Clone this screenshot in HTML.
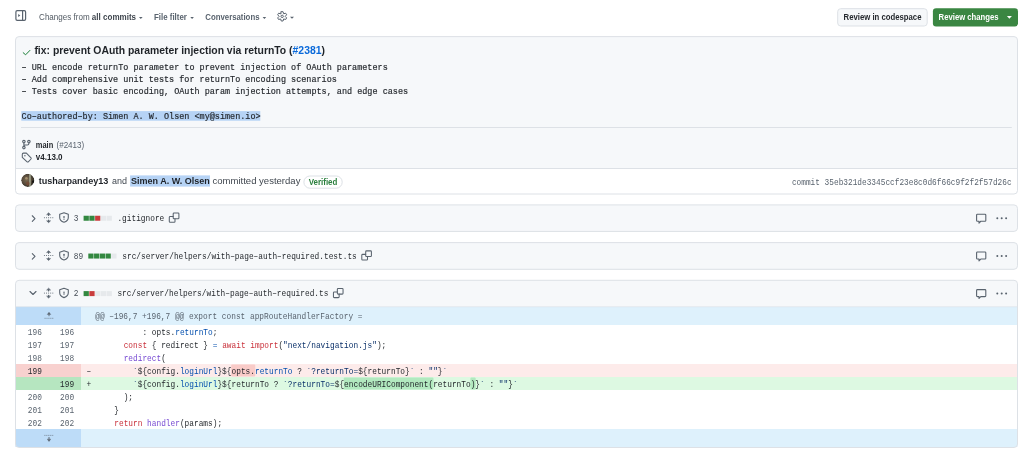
<!DOCTYPE html>
<html><head><meta charset="utf-8"><title>commit</title>
<style>
html,body{margin:0;padding:0;background:#ffffff;width:1024px;height:452px;overflow:hidden;}
svg{display:block;will-change:transform;font-family:"Liberation Sans", sans-serif;}
text{white-space:pre;}
</style></head><body>
<svg width="1024" height="452" viewBox="0 0 1024 452">
<rect x="15.9" y="10.6" width="9.7" height="9.7" fill="none" stroke="#59636e" stroke-width="1.2" rx="1.3" />
<path d="M22.6 10.6V20.3" fill="none" stroke="#59636e" stroke-width="1.2" stroke-linejoin="round" stroke-linecap="round" />
<path d="M18.2 13.9L20.3 15.45L18.2 17Z" fill="#59636e" />
<text x="39.1" y="19.85" font-size="8.6" fill="#525a63" textLength="97" lengthAdjust="spacingAndGlyphs" ><tspan>Changes from </tspan><tspan font-weight="bold" fill="#40474f">all commits</tspan></text>
<path d="M139.0 16.9L142.60000000000002 16.9L140.8 18.9Z" fill="#59636e" />
<text x="154" y="19.85" font-size="8.6" fill="#59636e" font-weight="bold" textLength="32.9" lengthAdjust="spacingAndGlyphs" >File filter</text>
<path d="M190.29999999999998 16.9L193.9 16.9L192.1 18.9Z" fill="#59636e" />
<text x="205.3" y="19.85" font-size="8.6" fill="#59636e" font-weight="bold" textLength="54.2" lengthAdjust="spacingAndGlyphs" >Conversations</text>
<path d="M262.59999999999997 16.9L266.2 16.9L264.4 18.9Z" fill="#59636e" />
<path d="M281.24 11.69L283.06 11.69L283.65 13.75L285.73 13.23L286.64 14.80L285.15 16.35L286.64 17.90L285.73 19.47L283.65 18.95L283.06 21.01L281.24 21.01L280.65 18.95L278.57 19.47L277.66 17.90L279.15 16.35L277.66 14.80L278.57 13.23L280.65 13.75Z" fill="none" stroke="#59636e" stroke-width="1.0" stroke-linejoin="round" stroke-linecap="round" />
<circle cx="282.15" cy="16.35" r="1.2" fill="none" stroke="#59636e" stroke-width="1.0"/>
<path d="M290.0 16.8L294.0 16.8L292.0 18.8Z" fill="#59636e" />
<rect x="837.7" y="8.7" width="89.5" height="17.3" fill="#f6f8fa" stroke="#dde1e6" stroke-width="1" rx="3" />
<text x="843.6" y="19.75" font-size="8.4" fill="#25292e" font-weight="bold" textLength="77.9" lengthAdjust="spacingAndGlyphs" >Review in codespace</text>
<rect x="932.9" y="8.2" width="85.1" height="18.2" fill="#3a8642" rx="3.2" />
<text x="938.6" y="19.75" font-size="8.4" fill="#ffffff" font-weight="bold" textLength="60" lengthAdjust="spacingAndGlyphs" >Review changes</text>
<path d="M1006.9 16.099999999999998L1011.9 16.099999999999998L1009.4 18.7Z" fill="#ffffff" />
<rect x="15.5" y="36.6" width="1002.0" height="157.4" fill="#ffffff" rx="3.5" />
<path d="M15.5 168.5V40.1a3.5 3.5 0 0 1 3.5-3.5H1014.0a3.5 3.5 0 0 1 3.5 3.5V168.5Z" fill="#f6f8fa"/>
<rect x="15.5" y="36.6" width="1002.0" height="157.4" fill="none" stroke="#dde1e6" stroke-width="1" rx="3.5" />
<path d="M15.5 168.5H1017.5" fill="none" stroke="#dde1e6" stroke-width="1" stroke-linejoin="round" stroke-linecap="butt"/>
<path d="M23.2 52.7L25.6 54.8L29.9 50.4" fill="none" stroke="#1a7f37" stroke-width="1.0" stroke-linejoin="round" stroke-linecap="round" />
<text x="34.4" y="53.7" font-size="10.4" fill="#1f2328" font-weight="bold" textLength="290.6" lengthAdjust="spacingAndGlyphs" ><tspan>fix: prevent OAuth parameter injection via returnTo (</tspan><tspan fill="#0969da">#2381</tspan><tspan>)</tspan></text>
<text x="21.6" y="69.9" font-size="9.8" fill="#1f2328" font-family='"Liberation Mono", monospace' textLength="366.12" lengthAdjust="spacingAndGlyphs" stroke="#1f2328" stroke-width="0.18">– URL encode returnTo parameter to prevent injection of OAuth parameters</text>
<text x="21.6" y="82.15" font-size="9.8" fill="#1f2328" font-family='"Liberation Mono", monospace' textLength="315.27" lengthAdjust="spacingAndGlyphs" stroke="#1f2328" stroke-width="0.18">– Add comprehensive unit tests for returnTo encoding scenarios</text>
<text x="21.6" y="94.4" font-size="9.8" fill="#1f2328" font-family='"Liberation Mono", monospace' textLength="386.46" lengthAdjust="spacingAndGlyphs" stroke="#1f2328" stroke-width="0.18">– Tests cover basic encoding, OAuth param injection attempts, and edge cases</text>
<rect x="21.3" y="111.1" width="239.0" height="9.6" fill="#b6d3f5" />
<text x="21.6" y="118.9" font-size="9.8" fill="#1f2328" font-family='"Liberation Mono", monospace' textLength="239.0" lengthAdjust="spacingAndGlyphs" stroke="#1f2328" stroke-width="0.18">Co–authored–by: Simen A. W. Olsen &lt;my@simen.io&gt;</text>
<path d="M21 127.5H1011.8" fill="none" stroke="#dde1e6" stroke-width="1" stroke-linejoin="round" stroke-linecap="butt"/>
<g fill="none" stroke="#59636e" stroke-width="1.1"><circle cx="23.9" cy="141.6" r="1.25"/><circle cx="28.9" cy="141.6" r="1.25"/><circle cx="23.9" cy="147.6" r="1.25"/><path d="M23.9 142.9V146.3M28.9 142.9V143.6Q28.9 145 27.4 145H25.2Q23.9 145 23.9 146"/></g>
<text x="35.8" y="147.7" font-size="8.2" fill="#1f2328" font-weight="bold" textLength="17.4" lengthAdjust="spacingAndGlyphs" >main</text>
<text x="56.5" y="147.7" font-size="8.2" fill="#59636e" textLength="27.7" lengthAdjust="spacingAndGlyphs" >(#2413)</text>
<path d="M22.3 154.2V157.4L27.1 161.8Q27.7 162.3 28.3 161.8L31.0 159.0Q31.5 158.4 31.0 157.9L26.4 153.1H23.4Q22.3 153.1 22.3 154.2Z" fill="none" stroke="#59636e" stroke-width="1.05" stroke-linejoin="round" stroke-linecap="round" />
<circle cx="24.9" cy="155.7" r="0.7" fill="#59636e"/>
<text x="35.8" y="159.8" font-size="8.2" fill="#1f2328" font-weight="bold" textLength="26.8" lengthAdjust="spacingAndGlyphs" >v4.13.0</text>
<defs><radialGradient id="av" cx="0.42" cy="0.45" r="0.6"><stop offset="0" stop-color="#7d6c52"/><stop offset="0.6" stop-color="#55493a"/><stop offset="1" stop-color="#2c2a22"/></radialGradient><clipPath id="avc"><circle cx="27.75" cy="180.35" r="6.6"/></clipPath><filter id="avb" x="-20%" y="-20%" width="140%" height="140%"><feGaussianBlur stdDeviation="0.6"/></filter></defs>
<g clip-path="url(#avc)"><circle cx="27.75" cy="180.35" r="6.6" fill="url(#av)"/><g filter="url(#avb)"><rect x="29.0" y="173" width="1.9" height="14" fill="#a9ae96" opacity="0.75"/><circle cx="26.4" cy="178.2" r="1.3" fill="#b9a27a" opacity="0.7"/><ellipse cx="27.8" cy="183.6" rx="1.8" ry="2.2" fill="#7a4a34" opacity="0.7"/><circle cx="33.2" cy="181.6" r="1.2" fill="#111" opacity="0.9"/></g></g>
<text x="38.7" y="184.35" font-size="9" fill="#1f2328" font-weight="bold" textLength="69.7" lengthAdjust="spacingAndGlyphs" >tusharpandey13</text>
<text x="112.0" y="184.35" font-size="9" fill="#40474f" textLength="15" lengthAdjust="spacingAndGlyphs" >and</text>
<rect x="130.1" y="175.4" width="79.9" height="11.2" fill="#b6d3f5" />
<text x="131.0" y="184.35" font-size="9" fill="#1f2328" font-weight="bold" textLength="78.8" lengthAdjust="spacingAndGlyphs" >Simen A. W. Olsen</text>
<text x="212.5" y="184.35" font-size="9" fill="#40474f" textLength="87.9" lengthAdjust="spacingAndGlyphs" >committed yesterday</text>
<rect x="303.9" y="176.0" width="38.3" height="12.2" fill="#ffffff" stroke="#dde1e6" stroke-width="1" rx="6" />
<text x="308.7" y="185.0" font-size="8.4" fill="#2a7f3d" font-weight="bold" textLength="28.7" lengthAdjust="spacingAndGlyphs" >Verified</text>
<text x="791.9" y="184.8" font-size="9.2" fill="#59636e" font-family='"Liberation Mono", monospace' textLength="219.7" lengthAdjust="spacingAndGlyphs" >commit 35eb321de3345ccf23e8c0d6f66c9f2f2f57d26c</text>
<rect x="15.5" y="204.9" width="1002.0" height="26.5" fill="#f6f8fa" stroke="#dde1e6" stroke-width="1" rx="3.5" />
<path d="M32.3 215.75L35.0 218.55L32.3 221.35" fill="none" stroke="#59636e" stroke-width="1.1" stroke-linejoin="round" stroke-linecap="round" />
<path d="M46.9 214.45L48.6 212.85L50.300000000000004 214.45Z" fill="#59636e" stroke="#59636e" stroke-width="0.6" stroke-linejoin="round" stroke-linecap="round" />
<path d="M48.6 214.15V215.55" fill="none" stroke="#59636e" stroke-width="1.1" stroke-linejoin="round" stroke-linecap="round" />
<path d="M46.9 221.05L48.6 222.65L50.300000000000004 221.05Z" fill="#59636e" stroke="#59636e" stroke-width="0.6" stroke-linejoin="round" stroke-linecap="round" />
<path d="M48.6 221.35V219.95" fill="none" stroke="#59636e" stroke-width="1.1" stroke-linejoin="round" stroke-linecap="round" />
<rect x="43.95" y="217.3" width="0.9" height="0.9" fill="#59636e" />
<rect x="46.05" y="217.3" width="0.9" height="0.9" fill="#59636e" />
<rect x="48.15" y="217.3" width="0.9" height="0.9" fill="#59636e" />
<rect x="50.25" y="217.3" width="0.9" height="0.9" fill="#59636e" />
<rect x="52.35" y="217.3" width="0.9" height="0.9" fill="#59636e" />
<path d="M64.0 212.85L68.3 214.35V217.45Q68.3 220.95 64.0 222.25Q59.7 220.95 59.7 217.45V214.35Z" fill="none" stroke="#59636e" stroke-width="1.1" stroke-linejoin="round" stroke-linecap="round" />
<rect x="63.4" y="216.05" width="1.2" height="2.3" fill="#59636e" rx="0.5" />
<rect x="63.4" y="218.85" width="1.2" height="0.9" fill="#59636e" rx="0.3" />
<text x="73.7" y="220.75" font-size="9.2" fill="#444c55" font-family='"Liberation Mono", monospace' textLength="4.69" lengthAdjust="spacingAndGlyphs" >3</text>
<rect x="83.6" y="215.75" width="5.25" height="5.0" fill="#338840" />
<rect x="89.35" y="215.75" width="5.25" height="5.0" fill="#338840" />
<rect x="95.1" y="215.75" width="5.25" height="5.0" fill="#c93c3c" />
<rect x="100.85" y="215.75" width="5.25" height="5.0" fill="#e6e9ec" />
<rect x="106.6" y="215.75" width="5.25" height="5.0" fill="#e6e9ec" />
<text x="117.4" y="220.95" font-size="9.2" fill="#1f2328" font-family='"Liberation Mono", monospace' textLength="46.9" lengthAdjust="spacingAndGlyphs" >.gitignore</text>
<path d="M173.20000000000002 213.85000000000002Q173.20000000000002 213.05 174.00000000000003 213.05H178.1Q178.9 213.05 178.9 213.85000000000002V217.95Q178.9 218.75 178.1 218.75H174.00000000000003Q173.20000000000002 218.75 173.20000000000002 217.95Z" fill="none" stroke="#59636e" stroke-width="1.05" stroke-linejoin="round" stroke-linecap="round" />
<path d="M173.20000000000002 216.55H170.10000000000002Q169.3 216.55 169.3 217.35000000000002V221.45Q169.3 222.25 170.10000000000002 222.25H174.2Q175.0 222.25 175.0 221.45V218.75" fill="none" stroke="#59636e" stroke-width="1.05" stroke-linejoin="round" stroke-linecap="round" />
<path d="M977.4 214.25H985.0Q985.8000000000001 214.25 985.8000000000001 215.04999999999998V220.45Q985.8000000000001 221.25 985.0 221.25H980.8000000000001L979.0 223.04999999999998V221.25H977.4Q976.6 221.25 976.6 220.45V215.04999999999998Q976.6 214.25 977.4 214.25Z" fill="none" stroke="#59636e" stroke-width="1.1" stroke-linejoin="round" stroke-linecap="round" />
<circle cx="997.3" cy="218.15" r="1.0" fill="#59636e"/>
<circle cx="1001.7" cy="218.15" r="1.0" fill="#59636e"/>
<circle cx="1006.1" cy="218.15" r="1.0" fill="#59636e"/>
<rect x="15.5" y="242.6" width="1002.0" height="26.7" fill="#f6f8fa" stroke="#dde1e6" stroke-width="1" rx="3.5" />
<path d="M32.3 253.55L35.0 256.35L32.3 259.15000000000003" fill="none" stroke="#59636e" stroke-width="1.1" stroke-linejoin="round" stroke-linecap="round" />
<path d="M46.9 252.25L48.6 250.65L50.300000000000004 252.25Z" fill="#59636e" stroke="#59636e" stroke-width="0.6" stroke-linejoin="round" stroke-linecap="round" />
<path d="M48.6 251.95000000000002V253.35000000000002" fill="none" stroke="#59636e" stroke-width="1.1" stroke-linejoin="round" stroke-linecap="round" />
<path d="M46.9 258.85L48.6 260.45L50.300000000000004 258.85Z" fill="#59636e" stroke="#59636e" stroke-width="0.6" stroke-linejoin="round" stroke-linecap="round" />
<path d="M48.6 259.15000000000003V257.75" fill="none" stroke="#59636e" stroke-width="1.1" stroke-linejoin="round" stroke-linecap="round" />
<rect x="43.95" y="255.1" width="0.9" height="0.9" fill="#59636e" />
<rect x="46.05" y="255.1" width="0.9" height="0.9" fill="#59636e" />
<rect x="48.15" y="255.1" width="0.9" height="0.9" fill="#59636e" />
<rect x="50.25" y="255.1" width="0.9" height="0.9" fill="#59636e" />
<rect x="52.35" y="255.1" width="0.9" height="0.9" fill="#59636e" />
<path d="M64.0 250.65L68.3 252.15V255.25Q68.3 258.75 64.0 260.05Q59.7 258.75 59.7 255.25V252.15Z" fill="none" stroke="#59636e" stroke-width="1.1" stroke-linejoin="round" stroke-linecap="round" />
<rect x="63.4" y="253.85000000000002" width="1.2" height="2.3" fill="#59636e" rx="0.5" />
<rect x="63.4" y="256.65000000000003" width="1.2" height="0.9" fill="#59636e" rx="0.3" />
<text x="73.7" y="258.55" font-size="9.2" fill="#444c55" font-family='"Liberation Mono", monospace' textLength="9.38" lengthAdjust="spacingAndGlyphs" >89</text>
<rect x="88.3" y="253.55" width="5.25" height="5.0" fill="#338840" />
<rect x="94.05" y="253.55" width="5.25" height="5.0" fill="#338840" />
<rect x="99.8" y="253.55" width="5.25" height="5.0" fill="#338840" />
<rect x="105.55" y="253.55" width="5.25" height="5.0" fill="#338840" />
<rect x="111.3" y="253.55" width="5.25" height="5.0" fill="#e6e9ec" />
<text x="122.3" y="258.75" font-size="9.2" fill="#1f2328" font-family='"Liberation Mono", monospace' textLength="234.5" lengthAdjust="spacingAndGlyphs" >src/server/helpers/with–page–auth–required.test.ts</text>
<path d="M365.7 251.65000000000003Q365.7 250.85000000000002 366.5 250.85000000000002H370.6Q371.40000000000003 250.85000000000002 371.40000000000003 251.65000000000003V255.75Q371.40000000000003 256.55 370.6 256.55H366.5Q365.7 256.55 365.7 255.75Z" fill="none" stroke="#59636e" stroke-width="1.05" stroke-linejoin="round" stroke-linecap="round" />
<path d="M365.7 254.35000000000002H362.6Q361.8 254.35000000000002 361.8 255.15000000000003V259.25Q361.8 260.05 362.6 260.05H366.7Q367.5 260.05 367.5 259.25V256.55" fill="none" stroke="#59636e" stroke-width="1.05" stroke-linejoin="round" stroke-linecap="round" />
<path d="M977.4 252.05H985.0Q985.8000000000001 252.05 985.8000000000001 252.85V258.25Q985.8000000000001 259.05 985.0 259.05H980.8000000000001L979.0 260.85V259.05H977.4Q976.6 259.05 976.6 258.25V252.85Q976.6 252.05 977.4 252.05Z" fill="none" stroke="#59636e" stroke-width="1.1" stroke-linejoin="round" stroke-linecap="round" />
<circle cx="997.3" cy="255.95000000000002" r="1.0" fill="#59636e"/>
<circle cx="1001.7" cy="255.95000000000002" r="1.0" fill="#59636e"/>
<circle cx="1006.1" cy="255.95000000000002" r="1.0" fill="#59636e"/>
<rect x="15.5" y="280.3" width="1002.0" height="167.2" fill="#ffffff" rx="3.5" />
<path d="M15.5 306.7V283.8a3.5 3.5 0 0 1 3.5-3.5H1014.0a3.5 3.5 0 0 1 3.5 3.5V306.7Z" fill="#f6f8fa"/>
<path d="M30.0 291.5L33.0 294.5L36.0 291.5" fill="none" stroke="#59636e" stroke-width="1.1" stroke-linejoin="round" stroke-linecap="round" />
<path d="M46.9 289.8L48.6 288.20000000000005L50.300000000000004 289.8Z" fill="#59636e" stroke="#59636e" stroke-width="0.6" stroke-linejoin="round" stroke-linecap="round" />
<path d="M48.6 289.5V290.90000000000003" fill="none" stroke="#59636e" stroke-width="1.1" stroke-linejoin="round" stroke-linecap="round" />
<path d="M46.9 296.40000000000003L48.6 298.0L50.300000000000004 296.40000000000003Z" fill="#59636e" stroke="#59636e" stroke-width="0.6" stroke-linejoin="round" stroke-linecap="round" />
<path d="M48.6 296.70000000000005V295.3" fill="none" stroke="#59636e" stroke-width="1.1" stroke-linejoin="round" stroke-linecap="round" />
<rect x="43.95" y="292.65" width="0.9" height="0.9" fill="#59636e" />
<rect x="46.05" y="292.65" width="0.9" height="0.9" fill="#59636e" />
<rect x="48.15" y="292.65" width="0.9" height="0.9" fill="#59636e" />
<rect x="50.25" y="292.65" width="0.9" height="0.9" fill="#59636e" />
<rect x="52.35" y="292.65" width="0.9" height="0.9" fill="#59636e" />
<path d="M64.0 288.20000000000005L68.3 289.70000000000005V292.8Q68.3 296.3 64.0 297.6Q59.7 296.3 59.7 292.8V289.70000000000005Z" fill="none" stroke="#59636e" stroke-width="1.1" stroke-linejoin="round" stroke-linecap="round" />
<rect x="63.4" y="291.40000000000003" width="1.2" height="2.3" fill="#59636e" rx="0.5" />
<rect x="63.4" y="294.20000000000005" width="1.2" height="0.9" fill="#59636e" rx="0.3" />
<text x="73.7" y="296.1" font-size="9.2" fill="#444c55" font-family='"Liberation Mono", monospace' textLength="4.69" lengthAdjust="spacingAndGlyphs" >2</text>
<rect x="83.6" y="291.1" width="5.25" height="5.0" fill="#338840" />
<rect x="89.35" y="291.1" width="5.25" height="5.0" fill="#c93c3c" />
<rect x="95.1" y="291.1" width="5.25" height="5.0" fill="#e6e9ec" />
<rect x="100.85" y="291.1" width="5.25" height="5.0" fill="#e6e9ec" />
<rect x="106.6" y="291.1" width="5.25" height="5.0" fill="#e6e9ec" />
<text x="117.4" y="296.3" font-size="9.2" fill="#1f2328" font-family='"Liberation Mono", monospace' textLength="211.05" lengthAdjust="spacingAndGlyphs" >src/server/helpers/with–page–auth–required.ts</text>
<path d="M337.35 289.20000000000005Q337.35 288.40000000000003 338.15000000000003 288.40000000000003H342.25000000000006Q343.05000000000007 288.40000000000003 343.05000000000007 289.20000000000005V293.3Q343.05000000000007 294.1 342.25000000000006 294.1H338.15000000000003Q337.35 294.1 337.35 293.3Z" fill="none" stroke="#59636e" stroke-width="1.05" stroke-linejoin="round" stroke-linecap="round" />
<path d="M337.35 291.90000000000003H334.25000000000006Q333.45000000000005 291.90000000000003 333.45000000000005 292.70000000000005V296.8Q333.45000000000005 297.6 334.25000000000006 297.6H338.35Q339.15000000000003 297.6 339.15000000000003 296.8V294.1" fill="none" stroke="#59636e" stroke-width="1.05" stroke-linejoin="round" stroke-linecap="round" />
<path d="M977.4 289.6H985.0Q985.8000000000001 289.6 985.8000000000001 290.40000000000003V295.8Q985.8000000000001 296.6 985.0 296.6H980.8000000000001L979.0 298.40000000000003V296.6H977.4Q976.6 296.6 976.6 295.8V290.40000000000003Q976.6 289.6 977.4 289.6Z" fill="none" stroke="#59636e" stroke-width="1.1" stroke-linejoin="round" stroke-linecap="round" />
<circle cx="997.3" cy="293.5" r="1.0" fill="#59636e"/>
<circle cx="1001.7" cy="293.5" r="1.0" fill="#59636e"/>
<circle cx="1006.1" cy="293.5" r="1.0" fill="#59636e"/>
<rect x="15.5" y="306.7" width="65.5" height="18.3" fill="#bddcf8" />
<rect x="81.0" y="306.7" width="936.5" height="18.3" fill="#def1fc" />
<path d="M47.5 314.2L49.0 312.3L50.5 314.2Z" fill="#59636e" stroke="#59636e" stroke-width="0.5" stroke-linejoin="round" stroke-linecap="round" />
<path d="M49.0 313.8V315.8" fill="none" stroke="#59636e" stroke-width="0.9" stroke-linejoin="round" stroke-linecap="round" />
<path d="M44.4 318.3H53.8" fill="none" stroke="#59636e" stroke-width="0.75" stroke-linejoin="round" stroke-linecap="butt" stroke-dasharray="1.4 0.5" opacity="0.65"/>
<text x="95.2" y="318.9" font-size="9.2" fill="#59636e" font-family='"Liberation Mono", monospace' textLength="267.33" lengthAdjust="spacingAndGlyphs" >@@ –196,7 +196,7 @@ export const appRouteHandlerFactory =</text>
<rect x="15.5" y="364.0" width="65.5" height="13.0" fill="#f8d1cf" />
<rect x="81.0" y="364.0" width="936.5" height="13.0" fill="#fdebea" />
<rect x="15.5" y="377.0" width="65.5" height="13.0" fill="#b6e6c0" />
<rect x="81.0" y="377.0" width="936.5" height="13.0" fill="#ddf9e2" />
<rect x="15.5" y="429.0" width="65.5" height="18.0" fill="#bddcf8" />
<rect x="81.0" y="429.0" width="936.5" height="18.0" fill="#def1fc" />
<path d="M44.2 435.4H53.8" fill="none" stroke="#59636e" stroke-width="0.75" stroke-linejoin="round" stroke-linecap="butt" stroke-dasharray="1.4 0.5" opacity="0.65"/>
<path d="M49.0 437.4V439.8" fill="none" stroke="#59636e" stroke-width="0.9" stroke-linejoin="round" stroke-linecap="round" />
<path d="M47.5 439.5L49.0 441.4L50.5 439.5Z" fill="#59636e" stroke="#59636e" stroke-width="0.5" stroke-linejoin="round" stroke-linecap="round" />
<rect x="231.21" y="364.5" width="24.05" height="12.0" fill="#f9cbc8" rx="1" />
<rect x="343.77" y="377.5" width="89.71" height="12.0" fill="#b2e9bf" rx="1" />
<rect x="470.4" y="377.5" width="5.29" height="12.0" fill="#b2e9bf" rx="1" />
<text x="27.83" y="334.6" font-size="9.2" fill="#59636e" font-family='"Liberation Mono", monospace' textLength="14.07" lengthAdjust="spacingAndGlyphs" >196</text>
<text x="60.03" y="334.6" font-size="9.2" fill="#59636e" font-family='"Liberation Mono", monospace' textLength="14.07" lengthAdjust="spacingAndGlyphs" >196</text>
<text x="95.5" y="334.6" font-size="9.2" font-family='"Liberation Mono", monospace' xml:space="preserve" textLength="121.94" lengthAdjust="spacingAndGlyphs"><tspan fill="#1f2328">          : opts.</tspan><tspan fill="#0550ae">returnTo</tspan><tspan fill="#1f2328">;</tspan></text>
<text x="27.83" y="347.6" font-size="9.2" fill="#59636e" font-family='"Liberation Mono", monospace' textLength="14.07" lengthAdjust="spacingAndGlyphs" >197</text>
<text x="60.03" y="347.6" font-size="9.2" fill="#59636e" font-family='"Liberation Mono", monospace' textLength="14.07" lengthAdjust="spacingAndGlyphs" >197</text>
<text x="95.5" y="347.6" font-size="9.2" font-family='"Liberation Mono", monospace' xml:space="preserve" textLength="290.78" lengthAdjust="spacingAndGlyphs"><tspan fill="#1f2328">      </tspan><tspan fill="#c9303a">const</tspan><tspan fill="#1f2328"> { redirect } </tspan><tspan fill="#0550ae">=</tspan><tspan fill="#1f2328"> </tspan><tspan fill="#c9303a">await</tspan><tspan fill="#1f2328"> </tspan><tspan fill="#c9303a">import</tspan><tspan fill="#1f2328">(</tspan><tspan fill="#0a3069">"next/navigation.js"</tspan><tspan fill="#1f2328">);</tspan></text>
<text x="27.83" y="360.6" font-size="9.2" fill="#59636e" font-family='"Liberation Mono", monospace' textLength="14.07" lengthAdjust="spacingAndGlyphs" >198</text>
<text x="60.03" y="360.6" font-size="9.2" fill="#59636e" font-family='"Liberation Mono", monospace' textLength="14.07" lengthAdjust="spacingAndGlyphs" >198</text>
<text x="95.5" y="360.6" font-size="9.2" font-family='"Liberation Mono", monospace' xml:space="preserve" textLength="70.35" lengthAdjust="spacingAndGlyphs"><tspan fill="#1f2328">      </tspan><tspan fill="#7649d2">redirect</tspan><tspan fill="#1f2328">(</tspan></text>
<text x="27.83" y="373.6" font-size="9.2" fill="#1f2328" font-family='"Liberation Mono", monospace' textLength="14.07" lengthAdjust="spacingAndGlyphs" >199</text>
<text x="86.5" y="373.6" font-size="9.2" fill="#1f2328" font-family='"Liberation Mono", monospace' textLength="4.69" lengthAdjust="spacingAndGlyphs" >–</text>
<text x="95.5" y="373.6" font-size="9.2" font-family='"Liberation Mono", monospace' xml:space="preserve" textLength="351.75" lengthAdjust="spacingAndGlyphs"><tspan fill="#1f2328">        </tspan><tspan fill="#0a3069">`</tspan><tspan fill="#1f2328">${config.</tspan><tspan fill="#0550ae">loginUrl</tspan><tspan fill="#1f2328">}${</tspan><tspan fill="#1f2328">opts.</tspan><tspan fill="#0550ae">returnTo</tspan><tspan fill="#1f2328"> ? </tspan><tspan fill="#0a3069">`?returnTo=</tspan><tspan fill="#1f2328">${returnTo}</tspan><tspan fill="#0a3069">`</tspan><tspan fill="#1f2328"> : </tspan><tspan fill="#0a3069">""</tspan><tspan fill="#1f2328">}</tspan><tspan fill="#0a3069">`</tspan></text>
<text x="60.03" y="386.6" font-size="9.2" fill="#1f2328" font-family='"Liberation Mono", monospace' textLength="14.07" lengthAdjust="spacingAndGlyphs" >199</text>
<text x="86.5" y="386.6" font-size="9.2" fill="#1f2328" font-family='"Liberation Mono", monospace' textLength="4.69" lengthAdjust="spacingAndGlyphs" >+</text>
<text x="95.5" y="386.6" font-size="9.2" font-family='"Liberation Mono", monospace' xml:space="preserve" textLength="422.1" lengthAdjust="spacingAndGlyphs"><tspan fill="#1f2328">        </tspan><tspan fill="#0a3069">`</tspan><tspan fill="#1f2328">${config.</tspan><tspan fill="#0550ae">loginUrl</tspan><tspan fill="#1f2328">}${</tspan><tspan fill="#1f2328">returnTo ? </tspan><tspan fill="#0a3069">`?returnTo=</tspan><tspan fill="#1f2328">${encodeURIComponent(returnTo)}</tspan><tspan fill="#0a3069">`</tspan><tspan fill="#1f2328"> : </tspan><tspan fill="#0a3069">""</tspan><tspan fill="#1f2328">}</tspan><tspan fill="#0a3069">`</tspan></text>
<text x="27.83" y="399.6" font-size="9.2" fill="#59636e" font-family='"Liberation Mono", monospace' textLength="14.07" lengthAdjust="spacingAndGlyphs" >200</text>
<text x="60.03" y="399.6" font-size="9.2" fill="#59636e" font-family='"Liberation Mono", monospace' textLength="14.07" lengthAdjust="spacingAndGlyphs" >200</text>
<text x="95.5" y="399.6" font-size="9.2" font-family='"Liberation Mono", monospace' xml:space="preserve" textLength="37.52" lengthAdjust="spacingAndGlyphs"><tspan fill="#1f2328">      );</tspan></text>
<text x="27.83" y="412.6" font-size="9.2" fill="#59636e" font-family='"Liberation Mono", monospace' textLength="14.07" lengthAdjust="spacingAndGlyphs" >201</text>
<text x="60.03" y="412.6" font-size="9.2" fill="#59636e" font-family='"Liberation Mono", monospace' textLength="14.07" lengthAdjust="spacingAndGlyphs" >201</text>
<text x="95.5" y="412.6" font-size="9.2" font-family='"Liberation Mono", monospace' xml:space="preserve" textLength="23.45" lengthAdjust="spacingAndGlyphs"><tspan fill="#1f2328">    }</tspan></text>
<text x="27.83" y="425.6" font-size="9.2" fill="#59636e" font-family='"Liberation Mono", monospace' textLength="14.07" lengthAdjust="spacingAndGlyphs" >202</text>
<text x="60.03" y="425.6" font-size="9.2" fill="#59636e" font-family='"Liberation Mono", monospace' textLength="14.07" lengthAdjust="spacingAndGlyphs" >202</text>
<text x="95.5" y="425.6" font-size="9.2" font-family='"Liberation Mono", monospace' xml:space="preserve" textLength="126.63" lengthAdjust="spacingAndGlyphs"><tspan fill="#1f2328">    </tspan><tspan fill="#c9303a">return</tspan><tspan fill="#1f2328"> </tspan><tspan fill="#7649d2">handler</tspan><tspan fill="#1f2328">(params);</tspan></text>
<rect x="15.5" y="280.3" width="1002.0" height="167.2" fill="none" stroke="#dde1e6" stroke-width="1" rx="3.5" />
<path d="M15.5 306.7H1017.5" fill="none" stroke="#dde1e6" stroke-width="0.6" stroke-linejoin="round" stroke-linecap="butt"/>
</svg>
</body></html>
